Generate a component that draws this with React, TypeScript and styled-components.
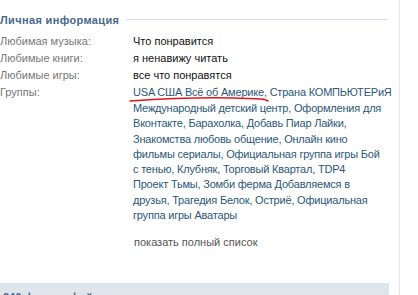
import React from "react";
import styled, { createGlobalStyle } from "styled-components";

const Global = createGlobalStyle`
  html, body { margin: 0; padding: 0; background: #fff; }
  body { font-family: "Liberation Sans", Tahoma, Arial, sans-serif; font-size: 11px; color: #000; overflow: hidden; }
`;

const Page = styled.div`
  width: 399px;
  height: 295px;
  border-right: 1px solid #e3e4ee;
  position: relative;
  overflow: hidden;
`;

const Content = styled.div`
  width: 389px;
  padding-top: 12px;
`;

const HeaderRow = styled.div`
  display: flex;
  align-items: center;
  height: 15px;
  margin-bottom: 6px;
`;

const Title = styled.h3`
  margin: 0;
  font-size: 11px;
  font-weight: bold;
  letter-spacing: 0.35px;
  color: #45688e;
  white-space: nowrap;
`;

const Rule = styled.div`
  flex: 1;
  height: 1px;
  background: #dae1e8;
  margin-left: 7px;
  margin-right: 1px;
`;

const InfoRow = styled.div`
  display: grid;
  grid-template-columns: 133px 1fr;
  line-height: 17px;
`;

const Label = styled.div`
  color: #777;
`;

const Value = styled.div`
  color: #111;
`;

const Groups = styled.div`
  line-height: 15.3px;
  position: relative;
  white-space: nowrap;
  letter-spacing: -0.2px;
`;

const FirstGroupLine = styled.div`
  line-height: 17px;
`;

const GroupLink = styled.a`
  color: #2b587a;
  text-decoration: none;
`;

const Sep = styled.span`
  color: #2b587a;
`;

const ShowAll = styled.div`
  margin: 12px 0 0 1px;
  color: #555;
  line-height: 15px;
  letter-spacing: 0;
`;

const Scribble = styled.svg`
  position: absolute;
  left: -4px;
  top: 12px;
  width: 145px;
  height: 8px;
  overflow: visible;
`;

const BottomBar = styled.div`
  margin-top: 33px;
  height: 14px;
  background: #dee5eb;
  padding: 7px 0 0 3px;
  box-sizing: border-box;
  font-weight: bold;
  color: #45688e;
  line-height: 15px;
`;

type Group = { name: string; breakAfter?: boolean };

const rest: Group[] = [
  { name: "Международный детский центр" },
  { name: "Оформления для|Вконтакте" },
  { name: "Барахолка" },
  { name: "Добавь Пиар Лайки", breakAfter: true },
  { name: "Знакомства любовь общение" },
  { name: "Онлайн кино|фильмы сериалы" },
  { name: "Официальная группа игры Бой|с тенью" },
  { name: "Клубняк" },
  { name: "Торговый Квартал" },
  { name: "TDP4|Проект Тьмы" },
  { name: "Зомби ферма Добавляемся в|друзья" },
  { name: "Трагедия Белок" },
  { name: "Остриё" },
  { name: "Официальная|группа игры Аватары" },
];

function GroupName({ name }: { name: string }) {
  const parts = name.split("|");
  return (
    <GroupLink href="#">
      {parts.map((p, i) => (
        <React.Fragment key={i}>
          {i > 0 && <br />}
          {p}
        </React.Fragment>
      ))}
    </GroupLink>
  );
}

export default function App() {
  return (
    <>
      <Global />
      <Page>
        <Content>
          <HeaderRow>
            <Title>Личная информация</Title>
            <Rule />
          </HeaderRow>
          <InfoRow>
            <Label>Любимая музыка:</Label>
            <Value>Что понравится</Value>
          </InfoRow>
          <InfoRow>
            <Label>Любимые книги:</Label>
            <Value>я ненавижу читать</Value>
          </InfoRow>
          <InfoRow>
            <Label>Любимые игры:</Label>
            <Value>все что понравятся</Value>
          </InfoRow>
          <InfoRow>
            <Label>Группы:</Label>
            <Groups>
              <FirstGroupLine>
                <GroupLink href="#">USA США Всё об Америке</GroupLink>
                <Sep>, </Sep>
                <GroupLink href="#">Страна КОМПЬЮТЕРиЯ</GroupLink>
              </FirstGroupLine>
              {rest.map((g, i) => (
                <React.Fragment key={g.name}>
                  <GroupName name={g.name} />
                  {i < rest.length - 1 && <Sep>{g.breakAfter ? "," : ", "}</Sep>}
                  {g.breakAfter && <br />}
                </React.Fragment>
              ))}
              <Scribble viewBox="0 0 145 8">
                <path
                  d="M1 5 C 30 3, 70 1, 105 2 S 135 3, 139 5"
                  fill="none"
                  stroke="#e3141c"
                  strokeWidth="1.6"
                  strokeLinecap="round"
                />
              </Scribble>
              <ShowAll>показать полный список</ShowAll>
            </Groups>
          </InfoRow>
          <BottomBar>246 фотографий</BottomBar>
        </Content>
      </Page>
    </>
  );
}
